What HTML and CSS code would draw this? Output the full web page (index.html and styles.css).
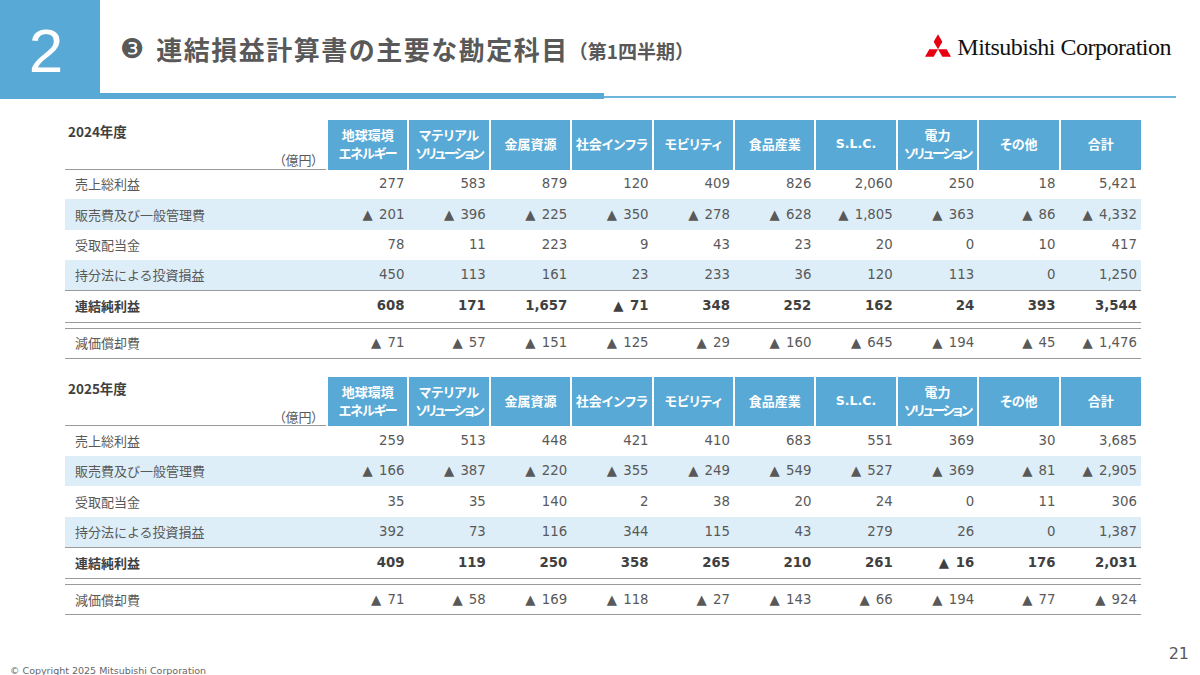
FILE: index.html
```html
<!DOCTYPE html>
<html lang="ja">
<head>
<meta charset="utf-8">
<title>連結損益計算書の主要な勘定科目</title>
<link rel="stylesheet" href="styles.css">
</head>
<body>
<div class="slide">
  <header class="top">
    <div class="secnum">2</div>
    <div class="topmain">
      <div class="titlerow">
        <h1 class="title"><span class="mark">❸</span>連結損益計算書の主要な勘定科目<span class="sub">（第1四半期）</span></h1>
        <div class="logo">
          <svg class="logo-mark" viewBox="-15 -17.32 30 25.98" width="26" height="23" aria-hidden="true">
            <polygon points="0,0 5,-8.66 0,-17.32 -5,-8.66" fill="#e60012"/>
            <polygon points="0,0 10,0 15,8.66 5,8.66" fill="#e60012"/>
            <polygon points="0,0 -10,0 -15,8.66 -5,8.66" fill="#e60012"/>
          </svg>
          <span class="logo-text">Mitsubishi Corporation</span>
        </div>
      </div>
      <div class="band"><div class="band-thick"></div><div class="band-thin"></div></div>
    </div>
  </header>

  <main class="content">
    <table class="pl">
      <colgroup><col class="c-label"><col class="c-num"><col class="c-num"><col class="c-num"><col class="c-num"><col class="c-num"><col class="c-num"><col class="c-num"><col class="c-num"><col class="c-num"><col class="c-num"></colgroup>
      <thead>
        <tr>
          <th class="corner"><div class="corner-in"><span class="year">2024年度</span><span class="unit">（億円）</span></div></th>
          <th>地球環境<br><span class="t1">エネルギー</span></th><th>マテリアル<br><span class="t2">ソリューション</span></th><th>金属資源</th><th>社会インフラ</th><th>モビリティ</th><th>食品産業</th><th class="latin">S.L.C.</th><th>電力<br><span class="t2">ソリューション</span></th><th>その他</th><th>合計</th>
        </tr>
      </thead>
      <tbody>
        <tr><td class="lbl">売上総利益</td><td>277</td><td>583</td><td>879</td><td>120</td><td>409</td><td>826</td><td>2,060</td><td>250</td><td>18</td><td>5,421</td></tr>
        <tr class="alt"><td class="lbl">販売費及び一般管理費</td><td>▲ 201</td><td>▲ 396</td><td>▲ 225</td><td>▲ 350</td><td>▲ 278</td><td>▲ 628</td><td>▲ 1,805</td><td>▲ 363</td><td>▲ 86</td><td>▲ 4,332</td></tr>
        <tr><td class="lbl">受取配当金</td><td>78</td><td>11</td><td>223</td><td>9</td><td>43</td><td>23</td><td>20</td><td>0</td><td>10</td><td>417</td></tr>
        <tr class="alt"><td class="lbl">持分法による投資損益</td><td>450</td><td>113</td><td>161</td><td>23</td><td>233</td><td>36</td><td>120</td><td>113</td><td>0</td><td>1,250</td></tr>
        <tr class="net"><td class="lbl">連結純利益</td><td>608</td><td>171</td><td>1,657</td><td>▲ 71</td><td>348</td><td>252</td><td>162</td><td>24</td><td>393</td><td>3,544</td></tr>
        <tr class="gap"><td colspan="11"></td></tr>
        <tr class="dep"><td class="lbl">減価償却費</td><td>▲ 71</td><td>▲ 57</td><td>▲ 151</td><td>▲ 125</td><td>▲ 29</td><td>▲ 160</td><td>▲ 645</td><td>▲ 194</td><td>▲ 45</td><td>▲ 1,476</td></tr>
      </tbody>
    </table>

    <table class="pl second">
      <colgroup><col class="c-label"><col class="c-num"><col class="c-num"><col class="c-num"><col class="c-num"><col class="c-num"><col class="c-num"><col class="c-num"><col class="c-num"><col class="c-num"><col class="c-num"></colgroup>
      <thead>
        <tr>
          <th class="corner"><div class="corner-in"><span class="year">2025年度</span><span class="unit">（億円）</span></div></th>
          <th>地球環境<br><span class="t1">エネルギー</span></th><th>マテリアル<br><span class="t2">ソリューション</span></th><th>金属資源</th><th>社会インフラ</th><th>モビリティ</th><th>食品産業</th><th class="latin">S.L.C.</th><th>電力<br><span class="t2">ソリューション</span></th><th>その他</th><th>合計</th>
        </tr>
      </thead>
      <tbody>
        <tr><td class="lbl">売上総利益</td><td>259</td><td>513</td><td>448</td><td>421</td><td>410</td><td>683</td><td>551</td><td>369</td><td>30</td><td>3,685</td></tr>
        <tr class="alt"><td class="lbl">販売費及び一般管理費</td><td>▲ 166</td><td>▲ 387</td><td>▲ 220</td><td>▲ 355</td><td>▲ 249</td><td>▲ 549</td><td>▲ 527</td><td>▲ 369</td><td>▲ 81</td><td>▲ 2,905</td></tr>
        <tr><td class="lbl">受取配当金</td><td>35</td><td>35</td><td>140</td><td>2</td><td>38</td><td>20</td><td>24</td><td>0</td><td>11</td><td>306</td></tr>
        <tr class="alt"><td class="lbl">持分法による投資損益</td><td>392</td><td>73</td><td>116</td><td>344</td><td>115</td><td>43</td><td>279</td><td>26</td><td>0</td><td>1,387</td></tr>
        <tr class="net"><td class="lbl">連結純利益</td><td>409</td><td>119</td><td>250</td><td>358</td><td>265</td><td>210</td><td>261</td><td>▲ 16</td><td>176</td><td>2,031</td></tr>
        <tr class="gap"><td colspan="11"></td></tr>
        <tr class="dep"><td class="lbl">減価償却費</td><td>▲ 71</td><td>▲ 58</td><td>▲ 169</td><td>▲ 118</td><td>▲ 27</td><td>▲ 143</td><td>▲ 66</td><td>▲ 194</td><td>▲ 77</td><td>▲ 924</td></tr>
      </tbody>
    </table>
  </main>

  <footer class="foot">
    <div class="pageno">21</div>
    <div class="copy">© Copyright 2025 Mitsubishi Corporation</div>
  </footer>
</div>
</body>
</html>
```

FILE: styles.css
```css
* { box-sizing: border-box; }
html, body { margin: 0; padding: 0; background: #fff; }
body { font-family: "Noto Sans CJK JP", "DejaVu Sans", sans-serif; color: #595959; }

.slide {
  width: 1200px;
  height: 675px;
  overflow: hidden;
  display: flex;
  flex-direction: column;
}

/* ---------- header ---------- */
.top { display: flex; height: 99px; flex: none; }
.secnum {
  width: 100px;
  height: 99px;
  background: #58a9d6;
  color: #fff;
  font-family: "Liberation Sans", Arial, sans-serif;
  font-size: 62px;
  line-height: 1;
  display: flex;
  align-items: center;
  justify-content: center;
  padding-top: 2px;
  padding-right: 8px;
}
.topmain { flex: 1; display: flex; flex-direction: column; }
.titlerow {
  height: 93px;
  display: flex;
  align-items: center;
  justify-content: space-between;
  padding: 4px 29px 0 20px;
}
.title {
  margin: 0;
  font-size: 26px;
  font-weight: 700;
  letter-spacing: 1.5px;
  color: #595959;
  display: flex;
  align-items: center;
  white-space: nowrap;
}
.title .mark {
  font-family: "DejaVu Sans", sans-serif;
  font-size: 27px;
  font-weight: 400;
  margin-right: 12px;
  letter-spacing: 0;
}
.title .sub {
  font-size: 19px;
  letter-spacing: 0;
  margin-left: 0;
  padding-top: 4px;
}
.logo { display: flex; align-items: center; gap: 6px; padding-bottom: 6px; }
.logo-mark { display: block; }
.logo-text {
  font-family: "Liberation Serif", "Times New Roman", serif;
  font-size: 24px;
  letter-spacing: -0.5px;
  color: #111;
  line-height: 1;
  padding-top: 3px;
}
.band { height: 6px; display: flex; align-items: flex-end; padding-right: 24px; }
.band-thick { width: 504px; height: 6px; background: #58a9d6; }
.band-thin { flex: 1; height: 2px; background: #6db6de; margin-bottom: 1px; }

/* ---------- tables ---------- */
.content { flex: none; padding-top: 21px; }
table.pl {
  border-collapse: collapse;
  table-layout: fixed;
  width: 1076px;
  margin-left: 65px;
}
table.pl.second { margin-top: 18px; }
col.c-label { width: 262px; }
col.c-num { width: 81.4px; }

table.pl th {
  background: #58a9d6;
  color: #fff;
  font-size: 13px;
  font-weight: 700;
  line-height: 18px;
  height: 49px;
  padding: 0;
  text-align: center;
  vertical-align: middle;
  border-left: 2px solid #fff;
  border-bottom: 1px solid #58a9d6;
  font-feature-settings: "palt";
  white-space: nowrap;
}
table.pl th .t1 { letter-spacing: -1px; }
table.pl th .t2 { letter-spacing: -2px; }
table.pl th.latin { font-family: "DejaVu Sans", sans-serif; font-size: 12.5px; }
table.pl th.corner {
  background: #fff;
  border-left: 0;
  border-bottom: 1px solid #9a9a9a;
  text-align: left;
  vertical-align: top;
}
.corner-in {
  height: 48px;
  display: flex;
  flex-direction: column;
  justify-content: space-between;
  padding: 2px 8px 0 3px;
}
.year { color: #404040; font-size: 13.5px; font-weight: 700; line-height: 18px; }
.unit { align-self: flex-end; color: #595959; font-size: 13px; font-weight: 400; line-height: 17px; }

table.pl td {
  height: 30.4px;
  padding: 0 4px 0 0;
  line-height: 16px;
  text-align: right;
  vertical-align: middle;
  font-family: "DejaVu Sans", sans-serif;
  font-size: 13.3px;
  word-spacing: 2px;
  color: #595959;
  white-space: nowrap;
}
table.pl td.lbl {
  text-align: left;
  padding-left: 10px;
  font-family: "Noto Sans CJK JP", sans-serif;
  font-size: 13px;
}
table.pl tr.alt td { background: #ddeef8; }
table.pl tr.net td {
  height: 31.5px;
  font-weight: 700;
  color: #404040;
  border-top: 1px solid #9a9a9a;
  border-bottom: 1px solid #9a9a9a;
}
table.pl tr.gap td { height: 6px; padding: 0; }
table.pl tr.dep td {
  height: 30px;
  border-top: 1px solid #9a9a9a;
  border-bottom: 1px solid #9a9a9a;
}

/* ---------- footer ---------- */
.foot { margin-top: auto; height: 30px; flex: none; }
.pageno {
  text-align: right;
  padding-right: 11px;
  font-family: "DejaVu Sans", sans-serif;
  font-size: 16px;
  line-height: 18px;
  color: #595959;
}
.copy {
  padding: 2px 0 0 10px;
  font-family: "DejaVu Sans", sans-serif;
  font-size: 9.5px;
  line-height: 12px;
  color: #666;
  white-space: nowrap;
}
```
